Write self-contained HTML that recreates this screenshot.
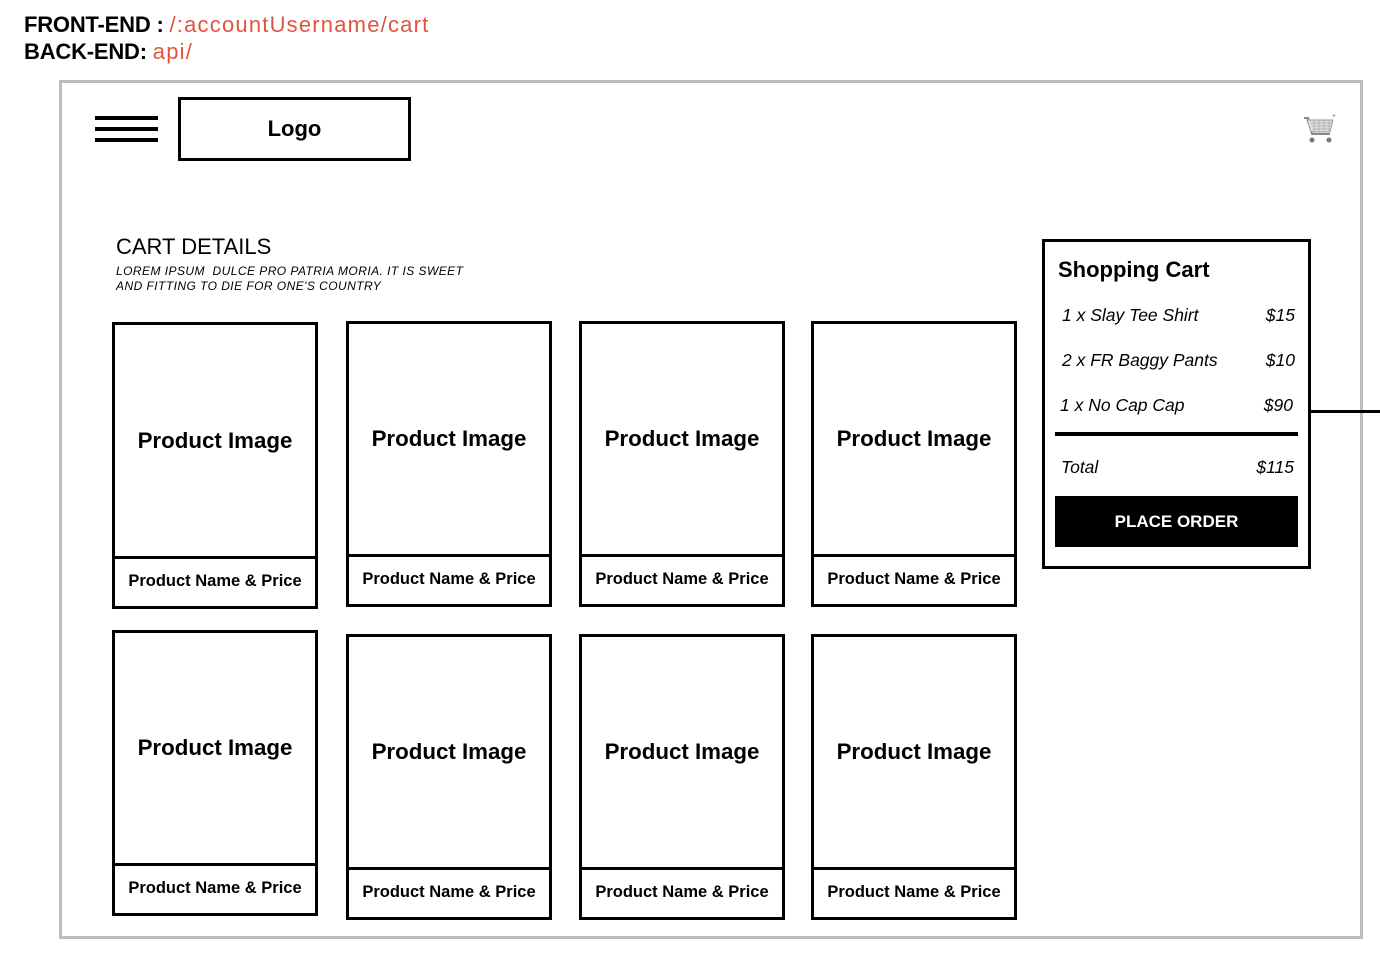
<!DOCTYPE html><html><head><style>
*{margin:0;padding:0;box-sizing:border-box}
body{width:1380px;height:966px;background:#fff;font-family:"Liberation Sans",sans-serif;position:relative;overflow:hidden;color:#000}
.a{position:absolute}
.hdr{font-size:22px;font-weight:bold;left:24px;line-height:27px;letter-spacing:-0.2px}
.red{color:#e0533f;font-weight:normal;letter-spacing:1.2px}
.frame{left:59px;top:80px;width:1304px;height:859px;border:3px solid #bdbdbd}
.card{position:absolute;width:206px;border:3px solid #000}
.card .img{position:absolute;left:0;right:0;top:0;border-bottom:3px solid #000;display:flex;align-items:center;justify-content:center;font-size:22.3px;font-weight:bold}
.card .nm{position:absolute;left:0;right:0;bottom:0;display:flex;align-items:center;justify-content:center;font-size:16.5px;font-weight:bold}
.row{position:absolute;left:1062px;width:233px;font-style:italic;font-size:17.5px;display:flex;justify-content:space-between}
</style></head><body>
<div class="a hdr" style="top:11px">FRONT-END : <span class="red">/:accountUsername/cart</span></div>
<div class="a hdr" style="top:38px">BACK-END: <span class="red">api/</span></div>
<div class="a frame"></div>
<div class="a" style="left:95px;top:116px;width:63px;height:4px;background:#000"></div>
<div class="a" style="left:95px;top:127px;width:63px;height:4px;background:#000"></div>
<div class="a" style="left:95px;top:138px;width:63px;height:4px;background:#000"></div>
<div class="a" style="left:178px;top:97px;width:233px;height:64px;border:3px solid #000;display:flex;align-items:center;justify-content:center;font-size:22px;font-weight:bold">Logo</div>
<svg class="a" style="left:1302px;top:114px" width="34" height="32" viewBox="0 0 34 32"><path d="M2 4h4l4 16h18" stroke="#888" stroke-width="2" fill="none"/><path d="M5 6h26l-3 12H9z" fill="#ddd" stroke="#999"/><path d="M9 9h21M10 12h19M11 15h17M12 6v12M17 6v12M22 6v12M27 6v12" stroke="#aaa" stroke-width="0.7"/><circle cx="10" cy="26" r="2.5" fill="#777"/><circle cx="27" cy="26" r="2.5" fill="#777"/><path d="M31 2l2 -1" stroke="#999" stroke-width="2"/></svg>
<div class="a" style="left:116px;top:234px;font-size:22px">CART DETAILS</div>
<div class="a" style="left:116px;top:264px;font-size:12px;font-style:italic;line-height:15px;letter-spacing:0.45px">LOREM IPSUM &nbsp;DULCE PRO PATRIA MORIA. IT IS SWEET<br>AND FITTING TO DIE FOR ONE'S COUNTRY</div>

<div class="card" style="left:112px;top:322px;height:287px"><div class="img" style="height:234px">Product Image</div><div class="nm" style="height:50px">Product Name &amp; Price</div></div>
<div class="card" style="left:346px;top:321px;height:286px"><div class="img" style="height:233px">Product Image</div><div class="nm" style="height:50px">Product Name &amp; Price</div></div>
<div class="card" style="left:579px;top:321px;height:286px"><div class="img" style="height:233px">Product Image</div><div class="nm" style="height:50px">Product Name &amp; Price</div></div>
<div class="card" style="left:811px;top:321px;height:286px"><div class="img" style="height:233px">Product Image</div><div class="nm" style="height:50px">Product Name &amp; Price</div></div>

<div class="card" style="left:112px;top:630px;height:286px"><div class="img" style="height:233px">Product Image</div><div class="nm" style="height:50px">Product Name &amp; Price</div></div>
<div class="card" style="left:346px;top:634px;height:286px"><div class="img" style="height:233px">Product Image</div><div class="nm" style="height:50px">Product Name &amp; Price</div></div>
<div class="card" style="left:579px;top:634px;height:286px"><div class="img" style="height:233px">Product Image</div><div class="nm" style="height:50px">Product Name &amp; Price</div></div>
<div class="card" style="left:811px;top:634px;height:286px"><div class="img" style="height:233px">Product Image</div><div class="nm" style="height:50px">Product Name &amp; Price</div></div>

<div class="a" style="left:1042px;top:239px;width:269px;height:330px;border:3px solid #000;background:#fff"></div>
<div class="a" style="left:1311px;top:410px;width:69px;height:3px;background:#000"></div>
<div class="a" style="left:1058px;top:257px;font-size:22px;font-weight:bold">Shopping Cart</div>
<div class="row" style="top:305px"><span>1 x Slay Tee Shirt</span><span>$15</span></div>
<div class="row" style="top:350px"><span>2 x FR Baggy Pants</span><span>$10</span></div>
<div class="row" style="top:395px;left:1060px"><span>1 x No Cap Cap</span><span>$90</span></div>
<div class="a" style="left:1055px;top:432px;width:243px;height:4px;background:#000"></div>
<div class="row" style="top:457px;left:1061px"><span>Total</span><span>$115</span></div>
<div class="a" style="left:1055px;top:496px;width:243px;height:51px;background:#000;color:#fff;font-size:17px;font-weight:bold;display:flex;align-items:center;justify-content:center">PLACE ORDER</div>
</body></html>
